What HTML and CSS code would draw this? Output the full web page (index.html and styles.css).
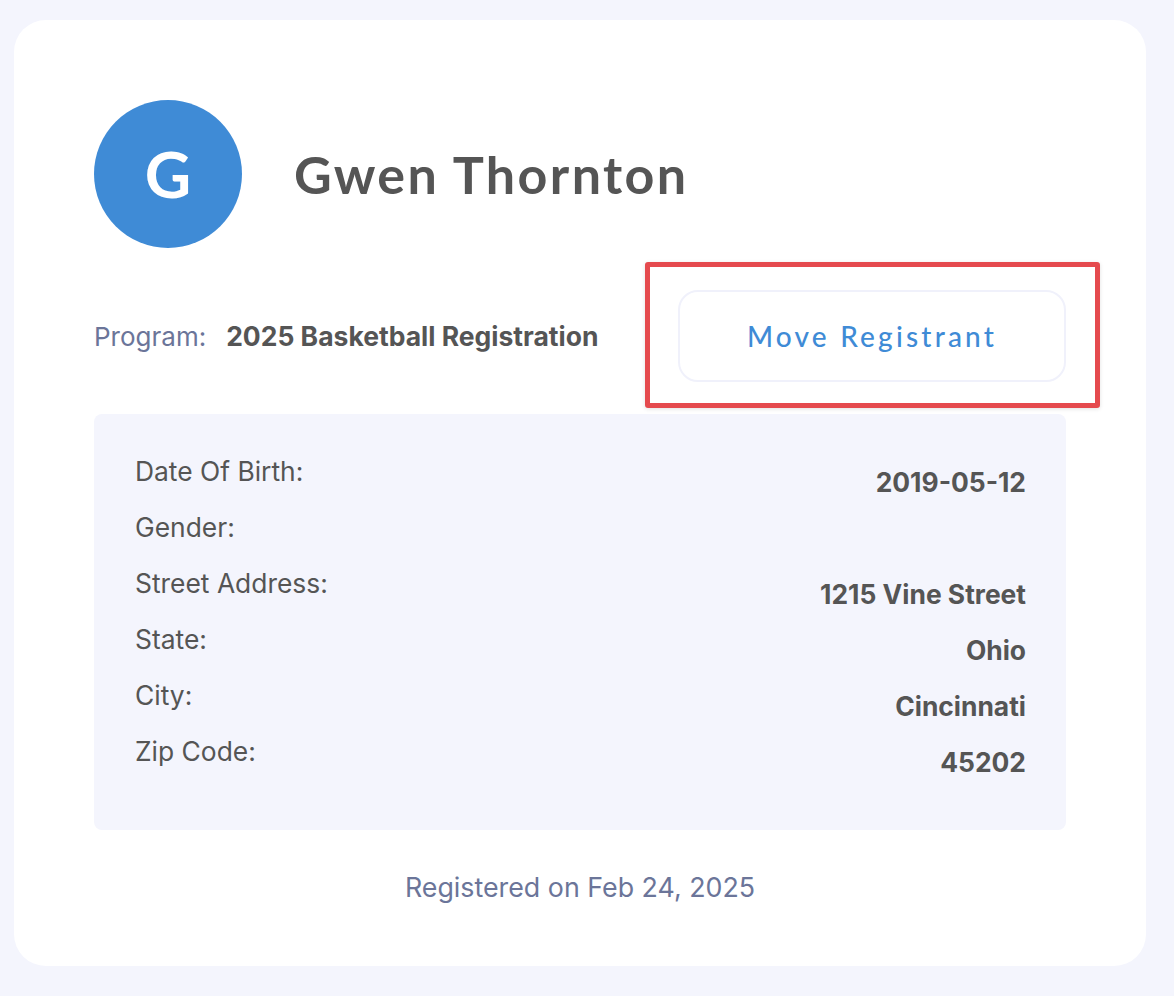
FILE: index.html
```html
<!DOCTYPE html>
<html lang="en">
<head>
<meta charset="utf-8">
<link rel="stylesheet" href="styles.css">
</head>
<body>
<div class="card">
  <div class="header">
    <div class="avatar">G</div>
    <h1 class="name">Gwen Thornton</h1>
  </div>
  <div class="program-row">
    <div class="program">
      <span class="program-label">Program:</span>
      <span class="program-value">2025 Basketball Registration</span>
    </div>
    <div class="btn-wrap">
      <button class="move-btn">Move Registrant</button>
      <div class="highlight"></div>
    </div>
  </div>
  <div class="info">
    <div class="row"><span class="label">Date Of Birth:</span><span class="value">2019-05-12</span></div>
    <div class="row"><span class="label">Gender:</span><span class="value"></span></div>
    <div class="row"><span class="label">Street Address:</span><span class="value">1215 Vine Street</span></div>
    <div class="row"><span class="label">State:</span><span class="value">Ohio</span></div>
    <div class="row"><span class="label">City:</span><span class="value">Cincinnati</span></div>
    <div class="row"><span class="label">Zip Code:</span><span class="value">45202</span></div>
  </div>
  <div class="footer">Registered on Feb 24, 2025</div>
</div>
</body>
</html>
```
FILE: styles.css
```css
* { box-sizing: border-box; }
html, body { margin: 0; padding: 0; }
body {
  background: #f4f5fd;
  padding: 20px 28px 30px 14px;
  font-family: Inter, "Liberation Sans", sans-serif;
}
.card {
  background: #ffffff;
  border-radius: 32px;
  width: 1132px;
  height: 946px;
  padding: 80px 80px 0 80px;
}
.header {
  display: flex;
  align-items: center;
  gap: 52px;
}
.avatar {
  width: 148px;
  height: 148px;
  border-radius: 50%;
  background: #3f8bd6;
  color: #fff;
  display: flex;
  align-items: center;
  justify-content: center;
  font-family: Lato, "Noto Sans", sans-serif;
  font-weight: 700;
  font-size: 64px;
  padding-bottom: 2px;
}
.name {
  margin: 0;
  font-family: Lato, "Noto Sans", sans-serif;
  font-weight: 700;
  font-size: 52px;
  letter-spacing: 2.4px;
  color: #555555;
}
.program-row {
  margin-top: 42px;
  display: flex;
  align-items: center;
  justify-content: space-between;
}
.program {
  display: flex;
  align-items: baseline;
  gap: 20px;
  font-size: 26px;
}
.program-label { color: #6b7599; }
.program-value { color: #555555; font-weight: 700; font-size: 26.5px; }
.btn-wrap { position: relative; }
.move-btn {
  display: block;
  width: 388px;
  height: 92px;
  background: #fff;
  border: 2px solid #f0f1fb;
  border-radius: 20px;
  color: #3f8bd6;
  font-family: Lato, "Noto Sans", sans-serif;
  font-size: 28px;
  font-weight: 500;
  letter-spacing: 3.2px;
  cursor: pointer;
}
.highlight {
  position: absolute;
  left: -33px;
  top: -28px;
  width: 455px;
  height: 146px;
  border: 5px solid #e54a4e;
  border-radius: 3px;
  box-shadow: 0 1px 4px rgba(0,0,0,0.12);
  pointer-events: none;
}
.info {
  margin-top: 32px;
  background: #f4f5fd;
  border-radius: 8px;
  padding: 40px 40px 40px 41px;
}
.row {
  display: flex;
  justify-content: space-between;
  align-items: flex-start;
  height: 56px;
  font-size: 26.4px;
  line-height: 34px;
  color: #555555;
}
.value {
  font-weight: 700;
  font-size: 26.4px;
  margin-top: 11px;
}
.footer {
  margin-top: 42px;
  text-align: center;
  font-family: Inter, "Liberation Sans", sans-serif;
  font-size: 26.8px;
  line-height: 30px;
  color: #6b7599;
}
```
